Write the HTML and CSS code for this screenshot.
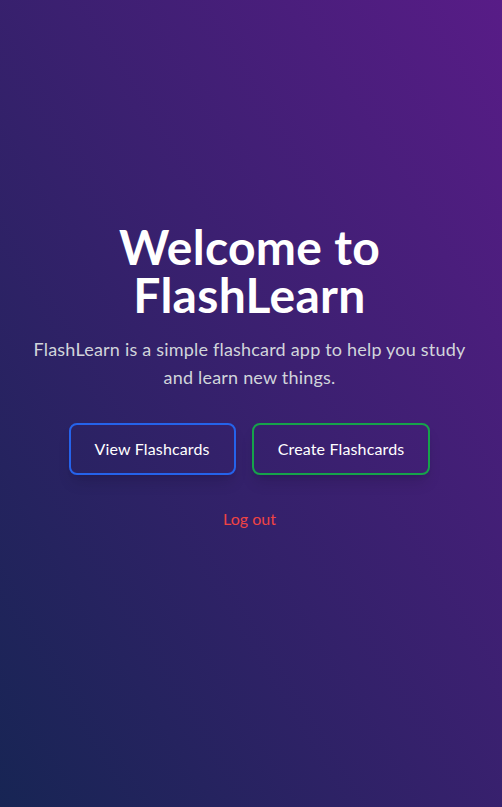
FILE: index.html
```html
<!DOCTYPE html>
<html lang="en">
<head>
<meta charset="utf-8">
<title>FlashLearn</title>
<link rel="stylesheet" href="styles.css">
</head>
<body>
<main class="page">
  <section class="hero">
    <h1 class="title">Welcome to FlashLearn</h1>
    <p class="lead">FlashLearn is a simple flashcard app to help you study and learn new things.</p>
    <div class="actions">
      <a class="btn btn-view" href="#">View Flashcards</a>
      <a class="btn btn-create" href="#">Create Flashcards</a>
    </div>
    <button class="logout" type="button">Log out</button>
  </section>
</main>
</body>
</html>
```

FILE: styles.css
```css
* { box-sizing: border-box; }
html, body { margin: 0; padding: 0; height: 100%; }
body {
  font-family: "Lato", "Noto Sans", sans-serif;
  color: #fff;
  background: linear-gradient(to top right, #172554, #581c87);
}
.page {
  min-height: 100vh;
  display: flex;
  align-items: center;
  justify-content: center;
  padding: 0 34px 54px 31px;
}
.hero {
  display: flex;
  flex-direction: column;
  align-items: center;
  text-align: center;
}
.title {
  margin: 0;
  font-size: 48px;
  line-height: 48px;
  font-weight: 700;
  letter-spacing: 0.3px;
  max-width: 300px;
}
.lead {
  margin: 16px 0 0;
  font-size: 18px;
  line-height: 28px;
  letter-spacing: 0.2px;
  color: #d1d5db;
}
.actions {
  display: flex;
  gap: 16px;
  margin-top: 32px;
}
.btn {
  display: block;
  padding: 12px 24px;
  border: 2px solid;
  border-radius: 8px;
  font-size: 16px;
  line-height: 24px;
  letter-spacing: 0.15px;
  color: #fff;
  text-decoration: none;
  box-shadow: 0 10px 15px -3px rgba(0,0,0,0.12), 0 4px 6px -4px rgba(0,0,0,0.12);
}
.btn-view { border-color: #2563eb; }
.btn-create { border-color: #16a34a; }
.logout {
  margin-top: 32px;
  background: none;
  border: 0;
  padding: 0;
  font: inherit;
  font-size: 16px;
  line-height: 24px;
  color: #ef4444;
  cursor: pointer;
}
```
